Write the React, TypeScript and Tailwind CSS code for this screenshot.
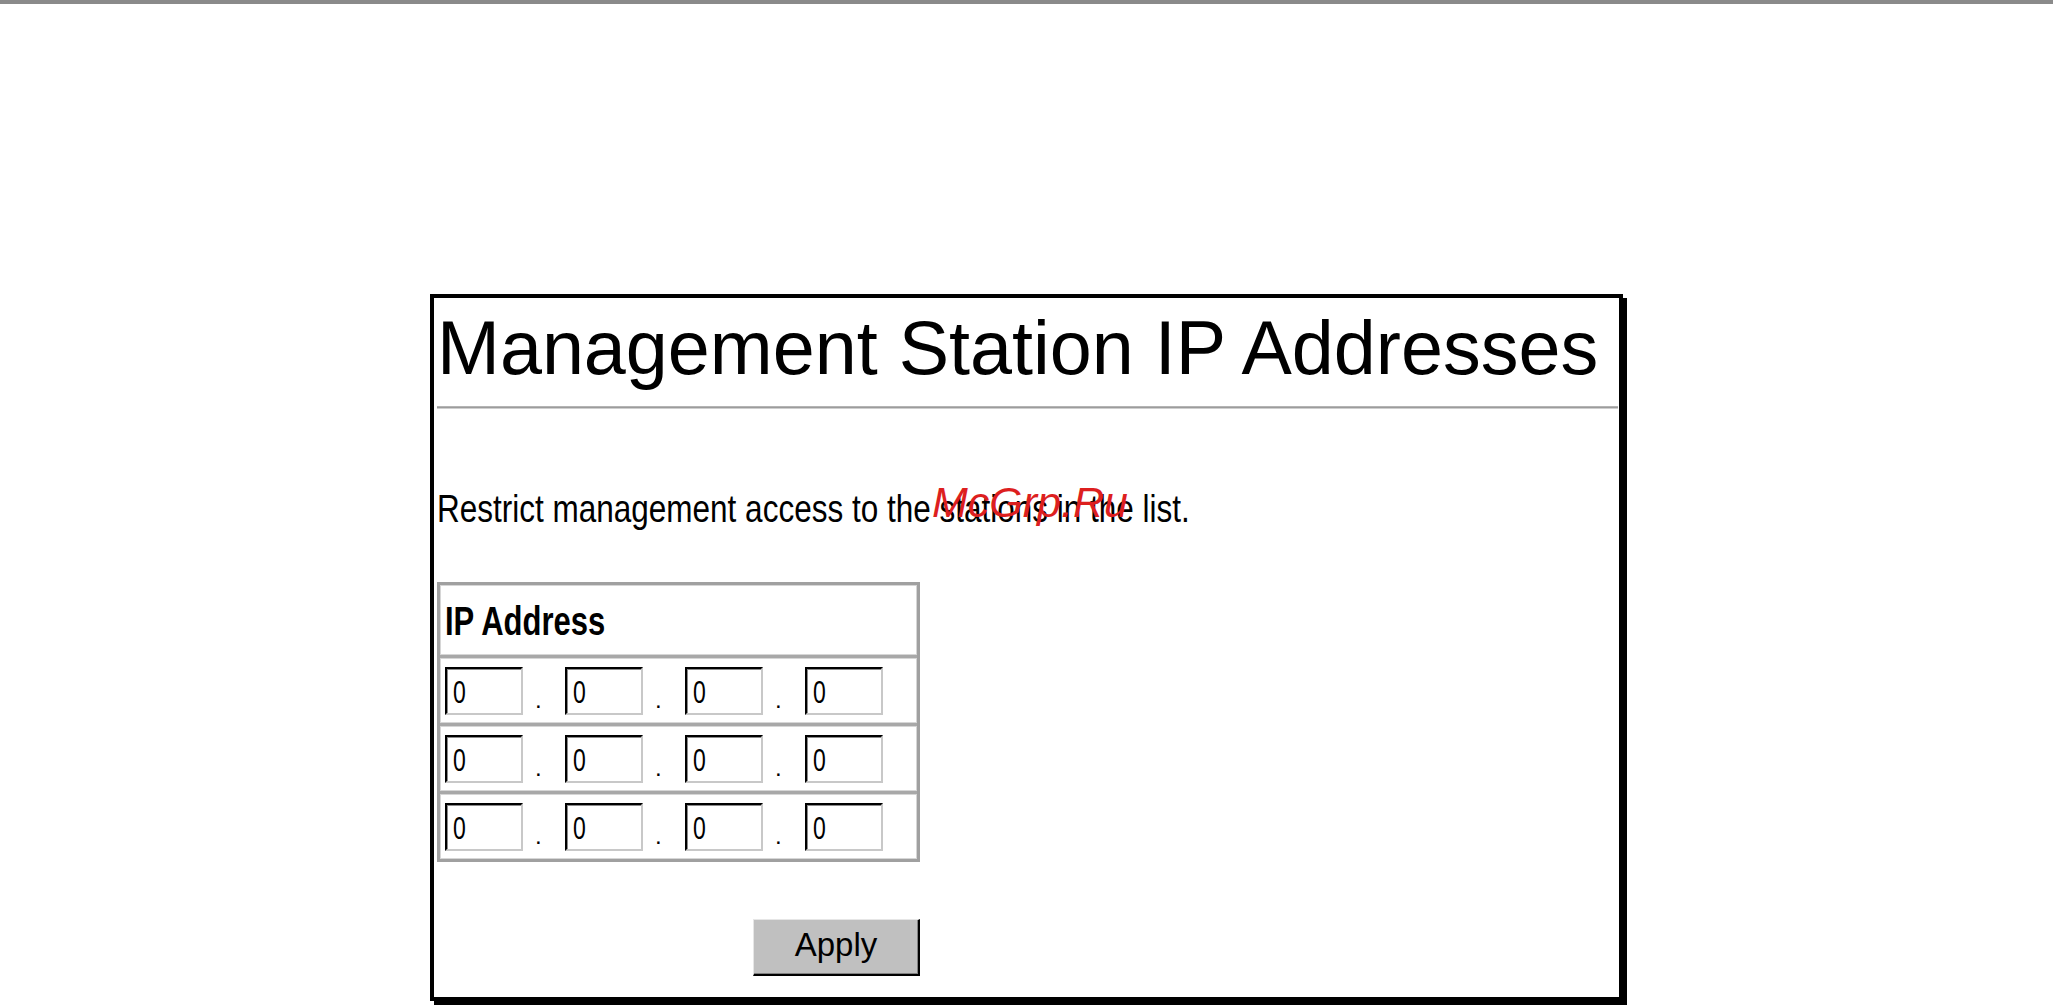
import React from "react";

const sans = "font-['Liberation_Sans',Arial,sans-serif]";

function IpInput() {
  return (
    <div
      className={`w-[78px] h-[48px] shrink-0 bg-white border-2 border-t-black border-l-black border-r-[#c8c8c8] border-b-[#c8c8c8] shadow-[inset_1px_1px_0_#8a8a8a] pl-[6px] pt-[12px] text-[23px] leading-none text-black ${sans}`}
    >
      <span className="inline-block scale-y-[1.4]">0</span>
    </div>
  );
}

function Dot() {
  return (
    <span className={`w-[42px] shrink-0 pl-[12px] mt-[21px] text-[24px] leading-none text-black ${sans}`}>.</span>
  );
}

function IpRow() {
  return (
    <div className="h-[68px] border-t-[3px] border-[#a8a8a8] shadow-[inset_0_0_0_1px_#d6d6d6] flex items-start pt-[9px] pl-[5px]">
      <IpInput />
      <Dot />
      <IpInput />
      <Dot />
      <IpInput />
      <Dot />
      <IpInput />
    </div>
  );
}

export default function App() {
  return (
    <div className="min-h-[1005px] bg-white">
      <div className="h-[4px] w-full bg-[#8a8a8a]" />
      <div className="ml-[430px] mt-[290px] w-[1193px] h-[707px] border-4 border-black shadow-[4px_4px_0_0_#000] bg-white relative">
        <div className={`pt-[13px] pl-[3px] text-[75.5px] leading-none text-black whitespace-nowrap ${sans}`}>
          Management Station IP Addresses
        </div>
        <div className="mt-[19px] ml-[3px] mr-[1px] h-[3px] bg-[#9c9c9c] border-t border-t-[#b4b4b4] border-b border-b-[#cfcfcf]" />
        <div className={`mt-[84px] pl-[3px] text-[31.5px] leading-none text-black whitespace-nowrap ${sans}`}>
          <span className="inline-block origin-center scale-y-[1.25]">
            Restrict management access to the stations in the list.
          </span>
        </div>
        <div className="mt-[58px] ml-[3px] w-[483px] border-[3px] border-[#a0a0a0]">
          <div className={`h-[70px] shadow-[inset_0_0_0_1px_#d6d6d6] pt-[21px] pl-[5px] text-[31px] leading-none font-bold text-black ${sans}`}>
            <span className="inline-block origin-center scale-y-[1.3]">IP Address</span>
          </div>
          <IpRow />
          <IpRow />
          <IpRow />
        </div>
        <button
          type="button"
          className={`mt-[57px] ml-[319px] w-[167px] h-[57px] bg-[#c0c0c0] border-t border-l border-t-[#e6e6e6] border-l-[#e6e6e6] border-r-2 border-b-2 border-r-black border-b-black shadow-[inset_-1px_-1px_0_#808080] flex items-center justify-center pb-[5px] text-[33px] leading-none text-black ${sans}`}
        >
          Apply
        </button>
        <div className={`absolute left-[498px] top-[183px] text-[43px] leading-none italic text-[#dd1f1f] whitespace-nowrap ${sans}`}>
          McGrp.Ru
        </div>
      </div>
    </div>
  );
}
